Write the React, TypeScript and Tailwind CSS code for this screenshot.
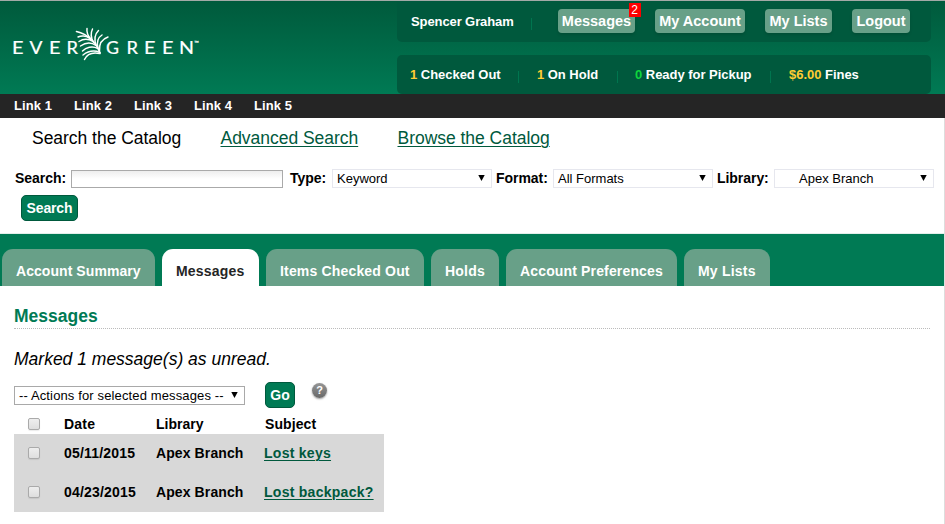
import type { ReactNode } from "react";

const LETTERS: { ch: string; x: number; w: number }[] = [
  { ch: "E", x: 12, w: 11.5 },
  { ch: "V", x: 29.5, w: 13 },
  { ch: "E", x: 49, w: 11.5 },
  { ch: "R", x: 66.5, w: 11.5 },
  { ch: "G", x: 106, w: 13 },
  { ch: "R", x: 126.5, w: 11.5 },
  { ch: "E", x: 144, w: 11.5 },
  { ch: "E", x: 162, w: 11.5 },
  { ch: "N", x: 179, w: 15 },
];

function Logo() {
  return (
    <svg width="210" height="93" viewBox="0 1 210 93" className="block shrink-0">
      <g fill="#fff" stroke="#fff" strokeWidth="0.2" fontFamily="Lato, sans-serif" fontSize="17.5">
        {LETTERS.map((l, i) => (
          <text key={i} x={l.x} y="54" textLength={l.w} lengthAdjust="spacingAndGlyphs">
            {l.ch}
          </text>
        ))}
        <text x="194" y="45" fontSize="6">™</text>
      </g>
      <g fill="none" stroke="#fff" strokeWidth="1.45" strokeLinecap="round">
        <path d="M100 53C97 45 91 35 76.500 31.500" strokeWidth="1.600" />
        <path d="M91 39.500C88 36 86.500 32 87 28.500" />
        <path d="M93.500 42.500C91 38 90.500 33 92.500 29" />
        <path d="M96 45C94 39 95 34 98.500 30.500" />
        <path d="M98 48C96.500 42 98 37.500 102 35" />
        <path d="M99.500 51C99 44 102 39 108 37" />
        <path d="M89 38C86 35.500 81 35.500 78 37" />
        <path d="M93 41.500C88 38.500 83 39 79 41.500" />
        <path d="M96 45.500C91 42 85 43 80.500 46" />
        <path d="M98 48.500C92 45.500 86 47.500 82.500 51" />
        <path d="M100 52.500C93 49.500 87 52 83 55" />
        <path d="M100 53.500C93 52 87 54 84.500 59.500" />
      </g>
    </svg>
  );
}

function HeaderButton({ className, children }: { className: string; children: ReactNode }) {
  return (
    <a className={`relative mb-[2px] flex h-6 items-center justify-center whitespace-nowrap rounded-[4px] bg-[#68a088] text-[14.5px] font-bold shadow-[0_2px_3px_rgba(0,0,0,0.12)] ${className}`}>
      {children}
    </a>
  );
}

function Divider({ className }: { className: string }) {
  return <span className={`h-3 w-px shrink-0 bg-[#00754f] ${className}`} />;
}

function Arrow({ className }: { className: string }) {
  return (
    <svg width="7" height="6" viewBox="0 0 7 6" className={`ml-auto shrink-0 ${className}`}>
      <path d="M0.300 0H6.700L3.500 6Z" fill="#000" />
    </svg>
  );
}

function FieldLabel({ className, children }: { className: string; children: ReactNode }) {
  return <b className={`mb-[2px] text-[14px] tracking-[-0.05px] ${className}`}>{children}</b>;
}

function Select({ className, children }: { className: string; children: ReactNode }) {
  return (
    <div className={`flex h-[19px] shrink-0 items-center whitespace-nowrap border border-[#e6e7ee] bg-white ${className}`}>
      {children}
      <Arrow className="mr-[6px] mb-[2px]" />
    </div>
  );
}

function Tab({ className, children }: { className: string; children: ReactNode }) {
  return (
    <a className={`flex h-[37px] shrink-0 whitespace-nowrap rounded-t-[11px] pt-[14px] pl-[14px] text-[14px] font-bold leading-4 ${className}`}>
      {children}
    </a>
  );
}

function Checkbox() {
  return <span className="block size-3 rounded-[2px] border border-[#aaa] bg-linear-to-b from-[#eee] to-[#dedede] shadow-[0_1px_1px_rgba(0,0,0,0.08)]" />;
}

function MessageRow({ date, subject }: { date: string; subject: string }) {
  return (
    <div className="flex h-[39px] items-center bg-[#d8d8d8] pb-px pl-[14px]">
      <Checkbox />
      <span className="ml-6 w-[92px] tracking-[0.2px]">{date}</span>
      <span className="w-[108px] tracking-[0.1px]">Apex Branch</span>
      <a className="tracking-[0.27px] text-[#00593d] underline decoration-1 underline-offset-2">{subject}</a>
    </div>
  );
}

export default function App() {
  return (
    <div className="h-[524px] w-[945px] overflow-hidden bg-white font-['Liberation_Sans',Arial,sans-serif] text-[13px] leading-4 text-black">
      <header className="flex h-[94px] border-t border-[#a3aaa7] bg-linear-to-b from-[#005a3c] to-[#007a54] text-white">
        <Logo />
        <div className="ml-[187px] flex w-[534px] flex-col justify-between font-bold">
          <div className="flex h-[41px] items-center rounded-b-[5px] bg-[#00593d] pl-[14px]">
            <span className="w-[120px] whitespace-nowrap tracking-[-0.1px]">Spencer Graham</span>
            <Divider className="mt-1" />
            <HeaderButton className="ml-[26px] w-[77px]">
              Messages
              <span className="absolute -top-[6px] left-[71px] flex h-[14px] w-3 items-center justify-center bg-[#f00] pr-px text-[12px] font-normal">2</span>
            </HeaderButton>
            <HeaderButton className="ml-5 w-[90px]">My Account</HeaderButton>
            <HeaderButton className="ml-5 w-[67px]">My Lists</HeaderButton>
            <HeaderButton className="ml-5 w-[58px]">Logout</HeaderButton>
          </div>
          <div className="flex h-[39px] items-center whitespace-nowrap rounded-[5px] bg-[#00593d] pl-[13px] tracking-[-0.03px]">
            <span className="w-[108px]"><span className="text-[#fc3]">1</span> Checked Out</span>
            <Divider className="mt-1" />
            <span className="ml-[18px] w-[80px]"><span className="text-[#fc3]">1</span> On Hold</span>
            <Divider className="mt-1" />
            <span className="ml-[17px] w-[135px]"><span className="text-[#0fd43c]">0</span> Ready for Pickup</span>
            <Divider className="mt-1" />
            <span className="ml-[18px]"><span className="text-[#fc3]">$6.00</span> Fines</span>
          </div>
        </div>
      </header>

      <nav className="flex h-6 items-center bg-[#252525] pl-[14px] font-bold text-white">
        {[1, 2, 3, 4, 5].map((n) => (
          <a key={n} className="w-[60px] tracking-[0.08px]">Link {n}</a>
        ))}
      </nav>

      <div className="border-r border-[#ddd]">
        <section className="h-[116px] border-b border-[#e3efeb]">
          <div className="flex whitespace-nowrap pt-[10px] pl-8 text-[17.500px] leading-5 tracking-[-0.03px]">
            <span className="w-[188.500px]">Search the Catalog</span>
            <a className="w-[177px] text-[#00593d] underline decoration-1 underline-offset-2">Advanced Search</a>
            <a className="text-[#00593d] underline decoration-1 underline-offset-2">Browse the Catalog</a>
          </div>
          <div className="mt-[21px] flex items-center whitespace-nowrap pl-[15px]">
            <FieldLabel className="w-14">Search:</FieldLabel>
            <span className="mt-px h-[18px] w-[212px] border border-[#aaa] bg-linear-to-b from-[#eee] via-white to-white" />
            <FieldLabel className="ml-[7px] w-[42px]">Type:</FieldLabel>
            <Select className="w-40 pl-1">Keyword</Select>
            <FieldLabel className="ml-1 w-[57px]">Format:</FieldLabel>
            <Select className="w-40 pl-1">All Formats</Select>
            <FieldLabel className="ml-1 w-[57px]">Library:</FieldLabel>
            <Select className="w-40 pl-6">Apex Branch</Select>
          </div>
          <button className="mt-[7px] ml-[21px] flex h-[26px] w-[57px] items-center justify-center rounded-[5px] border border-[#00593d] bg-[#007a54] text-[14px] font-bold tracking-[-0.15px] text-white">Search</button>
        </section>

        <div className="flex h-[52px] items-end gap-[7px] bg-[#007a54] pl-[2px] text-white">
          <Tab className="w-[153px] bg-[#68a088] tracking-[0.06px]">Account Summary</Tab>
          <Tab className="w-[97px] bg-white tracking-[0.2px] text-[#252525]">Messages</Tab>
          <Tab className="w-[158px] bg-[#68a088] tracking-[0.17px]">Items Checked Out</Tab>
          <Tab className="w-[68px] bg-[#68a088] tracking-[0.2px]">Holds</Tab>
          <Tab className="w-[171px] bg-[#68a088] tracking-[0.15px]">Account Preferences</Tab>
          <Tab className="w-[86px] bg-[#68a088] tracking-[0.2px]">My Lists</Tab>
        </div>

        <main className="h-[238px] pt-5 pl-[14px]">
          <h1 className="mr-[14px] h-[23px] border-b border-dotted border-[#bbb] text-[17.500px] font-bold leading-5 text-[#007a54]">Messages</h1>
          <p className="mt-5 text-[17.500px] italic leading-5">Marked 1 message(s) as unread.</p>
          <div className="mt-[13px] flex h-[26px] items-center">
            <div className="flex h-[19px] w-[231px] items-center whitespace-nowrap border border-[#a9a9a9] pl-1">
              <span className="pt-px tracking-[0.13px]">-- Actions for selected messages --</span>
              <Arrow className="mr-[6px] mb-px" />
            </div>
            <button className="ml-5 flex h-[26px] w-[30px] items-center justify-center rounded-[5px] border border-[#00593d] bg-[#007a54] text-[14px] font-bold text-white">Go</button>
            <span className="mb-[9px] ml-[17px] flex size-[15px] items-center justify-center rounded-full bg-linear-to-b from-[#969696] to-[#686868] text-[11px] font-bold leading-none text-white shadow-[0_1px_2px_rgba(0,0,0,0.4)]">?</span>
          </div>
          <div className="w-[370px] whitespace-nowrap text-[14px] font-bold">
            <div className="flex h-[26px] items-center pt-[6px] pl-[14px]">
              <Checkbox />
              <span className="ml-6 w-[92px] tracking-[0.2px]">Date</span>
              <span className="w-[109px]">Library</span>
              <span className="tracking-[0.1px]">Subject</span>
            </div>
            <MessageRow date="05/11/2015" subject="Lost keys" />
            <MessageRow date="04/23/2015" subject="Lost backpack?" />
          </div>
        </main>
      </div>
    </div>
  );
}
